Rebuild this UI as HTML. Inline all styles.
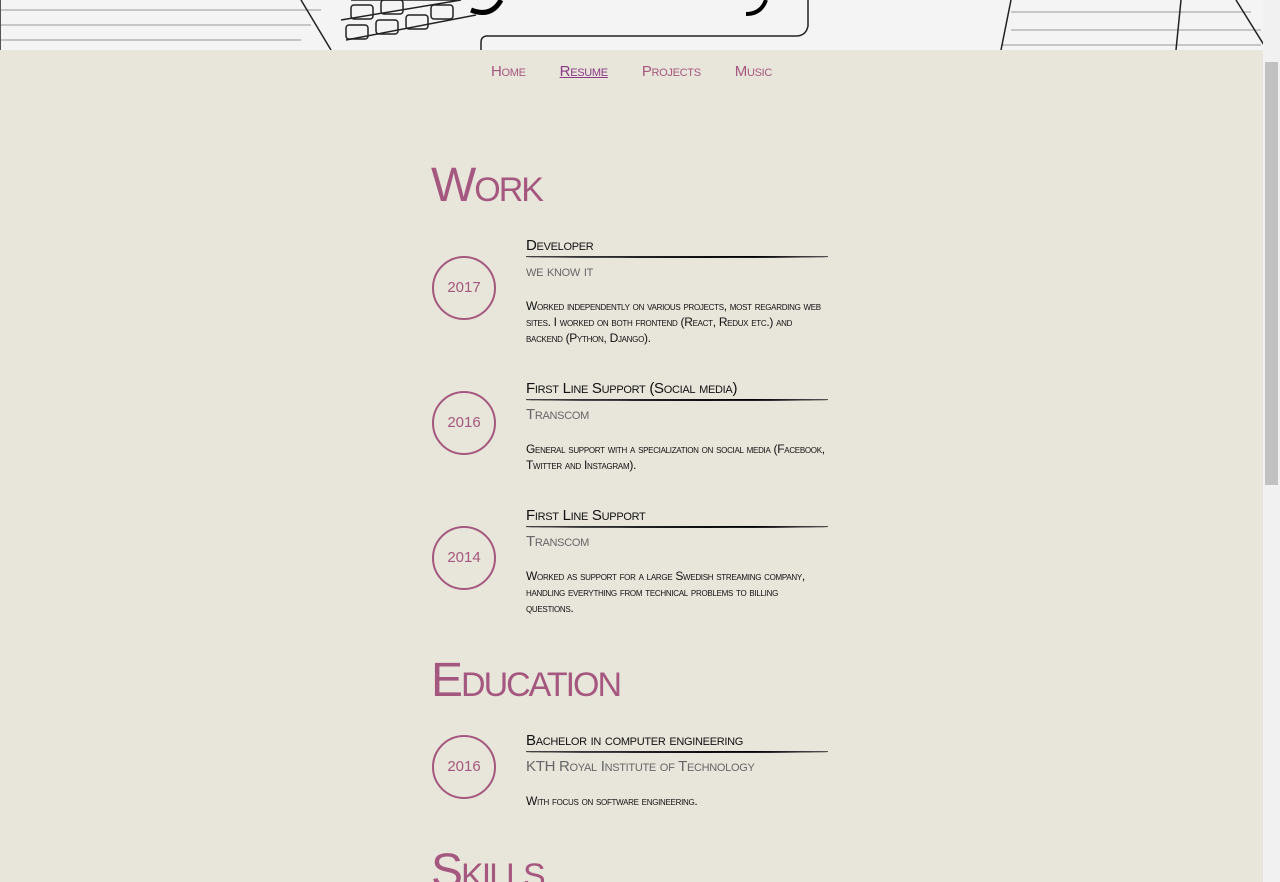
<!DOCTYPE html>
<html><head><meta charset="utf-8"><style>
*{margin:0;padding:0;box-sizing:border-box}
html,body{width:1280px;height:882px;overflow:hidden;background:#e8e5da;font-family:"Liberation Sans",sans-serif;font-variant:small-caps}
#w{position:relative;width:1280px;height:882px;overflow:hidden}
.hdr{position:absolute;left:0;top:0;width:1263px;height:50px;background:#f4f4f4;overflow:hidden;border-left:1px solid #555}
.sb{position:absolute;right:0;top:0;width:17px;height:882px;background:#f1f1f1}
.sb div{position:absolute;left:2px;top:62px;width:13px;height:423px;background:#c1c1c1}
nav{position:absolute;top:63px;left:0;width:1263px;text-align:center;font-size:15px;color:#a5587f;letter-spacing:-0.3px}
nav span{margin:0 17px}
nav .a{text-decoration:underline;color:#8b3a86}
h2{position:absolute;left:431px;font-size:48px;font-weight:normal;color:#a5587f;letter-spacing:-2px}
.c{position:absolute;left:432px;width:64px;height:64px;border:2.5px solid #a5587f;border-radius:50%;color:#a5587f;font-size:15px;text-align:center;line-height:59px}
.e{position:absolute;left:526px;width:302px}
.t{font-size:15px;color:#111;height:20px;position:relative;letter-spacing:-0.3px}
.t:after{content:"";position:absolute;left:0;right:0;bottom:-1px;height:2px;background:linear-gradient(90deg,#444,#000 75%,#555);border-radius:0 0 50% 50%}
.s{font-size:15px;color:#666;margin-top:6px;letter-spacing:-0.3px}
.d{font-size:12px;color:#111;line-height:16px;margin-top:18px;letter-spacing:-0.3px}
</style></head><body><div id="w">
<div class="hdr">
<svg width="1263" height="50">
<g stroke="#999" stroke-width="1" fill="none">
<path d="M0 10h320M0 25h310M0 40h300M1010 12h240M1010 30h250M1000 45h260"/>
</g>
<g stroke="#222" stroke-width="1.5" fill="none">
<path d="M300 0 L330 50M350 0 l110 0 M340 20 l120-20 M345 40 l130-25"/>
<rect x="350" y="5" width="22" height="14" rx="3"/><rect x="380" y="0" width="22" height="14" rx="3"/><rect x="345" y="25" width="22" height="14" rx="3"/><rect x="375" y="20" width="22" height="14" rx="3"/><rect x="405" y="15" width="22" height="14" rx="3"/><rect x="430" y="5" width="22" height="14" rx="3"/>
<path d="M480 50 v-8 q0-5 5-6 h310 q10 0 12-10 v-26"/>
<path d="M1010 0 L1000 50 M1180 0 L1175 50 M1235 0 L1263 45"/>
</g>
<path d="M470 10 q20 8 30-10" stroke="#000" stroke-width="5" fill="none"/>
<path d="M745 14 q15 0 20-14" stroke="#000" stroke-width="4" fill="none"/>
</svg>
</div>
<div class="sb"><div></div></div>
<nav><span>Home</span><span class="a">Resume</span><span>Projects</span><span>Music</span></nav>

<h2 style="top:158px">Work</h2>
<div class="c" style="top:256px">2017</div>
<div class="e" style="top:237px"><div class="t">Developer</div><div class="s">we know it</div><div class="d">Worked independently on various projects, most regarding web sites. I worked on both frontend (React, Redux etc.) and backend (Python, Django).</div></div>

<div class="c" style="top:391px">2016</div>
<div class="e" style="top:380px"><div class="t">First Line Support (Social media)</div><div class="s">Transcom</div><div class="d">General support with a specialization on social media (Facebook, Twitter and Instagram).</div></div>

<div class="c" style="top:526px">2014</div>
<div class="e" style="top:507px"><div class="t">First Line Support</div><div class="s">Transcom</div><div class="d">Worked as support for a large Swedish streaming company, handling everything from technical problems to billing questions.</div></div>

<h2 style="top:653px">Education</h2>
<div class="c" style="top:735px">2016</div>
<div class="e" style="top:732px"><div class="t">Bachelor in computer engineering</div><div class="s">KTH Royal Institute of Technology</div><div class="d">With focus on software engineering.</div></div>

<h2 style="top:844px">Skills</h2>
</div></body></html>
